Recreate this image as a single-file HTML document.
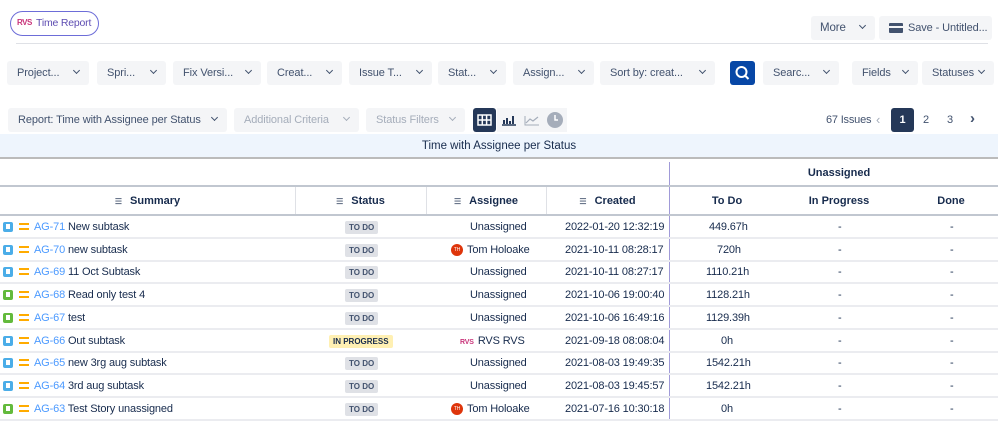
<!DOCTYPE html>
<html><head><meta charset="utf-8"><style>
*{box-sizing:border-box;margin:0;padding:0}
body{width:998px;height:422px;overflow:hidden;background:#fff;font-family:"Liberation Sans",Arial,sans-serif;font-size:11px;color:#172b4d;position:relative}
.a{position:absolute}
.btn{position:absolute;height:24px;background:#f4f5f7;border-radius:3px;color:#42526e;font-size:11px;letter-spacing:-0.1px;line-height:24px;padding-left:10px;white-space:nowrap}
.btn .cv{position:absolute;right:10px;top:0;font-size:9px}
.dis{color:#a5adba}
.cv:before{content:"";display:inline-block;width:4px;height:4px;border-right:1.5px solid currentColor;border-bottom:1.5px solid currentColor;transform:rotate(45deg);position:relative;top:-3px}
.row{position:absolute;left:0;width:998px;height:23px;border-bottom:2px solid #ebecf0;font-size:11px;letter-spacing:-0.15px;color:#172b4d}
.row div{position:absolute;top:0;line-height:22px;white-space:nowrap}
.td{background:#dfe1e6;color:#42526e;font-size:8px;font-weight:bold;padding:0 4px;line-height:13px!important;top:5px!important;border-radius:2px;letter-spacing:0}
.ip{background:#fff0b3;color:#172b4d}
.ic{width:10px;height:10px;border-radius:2px;top:6px!important}
.ic:after{content:"";position:absolute;left:3px;top:2px;width:4px;height:5px;background:#fff}
.sub{background:#4bade8}
.sto{background:#63ba3c}
.pr{left:19px;top:5px!important;line-height:0!important}
.pr:before,.pr:after{content:"";display:block;width:10px;height:2px;background:#ffab00;margin-top:2px}
.pr:after{margin-top:3px}
.key{color:#4c9aff}
.th{position:absolute;font-weight:bold;font-size:11px;color:#172b4d;text-align:center;line-height:28px}
.sort{font-size:8px;color:#6b778c;margin-right:8px}
.av{display:inline-block;width:12px;height:12px;border-radius:50%;background:#de350b;color:#fff;font-size:5px;text-align:center;line-height:12px;vertical-align:middle;margin-right:4px}
</style></head><body>
<div class="a" style="left:10px;top:11px;width:89px;height:25px;border:1.3px solid #6d6dd8;border-radius:13px;color:#5e4db2;font-size:10.5px;line-height:22px;padding-left:25px;letter-spacing:-0.2px">Time Report</div>
<div class="a" style="left:17px;top:18px;font-size:8px;font-weight:bold;color:#c9347a;letter-spacing:-0.5px">RVS</div>
<div class="a" style="left:16px;top:43px;width:972px;height:1px;background:#dfe1e6"></div>
<div class="btn" style="left:811px;top:16px;width:64px;padding-left:9px;font-size:11.5px">More<span class="cv"></span></div>
<div class="btn" style="left:879px;top:16px;width:113px;padding-left:29px">Save - Untitled...</div>
<div class="a" style="left:889px;top:23px;width:14px;height:10px;background:#42526e;border-radius:1px"><div class="a" style="left:0;top:3px;width:14px;height:2px;background:#f4f5f7"></div></div>

<div class="btn" style="left:7px;top:61px;width:82px">Project...<span class="cv"></span></div>
<div class="btn" style="left:97px;top:61px;width:69px">Spri...<span class="cv"></span></div>
<div class="btn" style="left:173px;top:61px;width:88px">Fix Versi...<span class="cv"></span></div>
<div class="btn" style="left:267px;top:61px;width:75px">Creat...<span class="cv"></span></div>
<div class="btn" style="left:349px;top:61px;width:83px">Issue T...<span class="cv"></span></div>
<div class="btn" style="left:438px;top:61px;width:68px">Stat...<span class="cv"></span></div>
<div class="btn" style="left:513px;top:61px;width:81px">Assign...<span class="cv"></span></div>
<div class="btn" style="left:600px;top:61px;width:115px">Sort by: creat...<span class="cv"></span></div>
<div class="a" style="left:730px;top:61px;width:25px;height:24px;background:#0747a6;border-radius:3px">
<svg width="25" height="24"><circle cx="11.5" cy="11" r="5" stroke="#fff" stroke-width="2" fill="none"/><path d="M15 14.5l3.5 3.5" stroke="#fff" stroke-width="2"/></svg></div>
<div class="btn" style="left:763px;top:61px;width:76px">Searc...<span class="cv"></span></div>
<div class="btn" style="left:852px;top:61px;width:66px">Fields<span class="cv"></span></div>
<div class="btn" style="left:922px;top:61px;width:72px">Statuses<span class="cv"></span></div>

<div class="btn" style="left:8px;top:108px;width:219px">Report: Time with Assignee per Status<span class="cv"></span></div>
<div class="btn dis" style="left:234px;top:108px;width:125px">Additional Criteria<span class="cv"></span></div>
<div class="btn dis" style="left:366px;top:108px;width:99px">Status Filters<span class="cv"></span></div>
<div class="a" style="left:473px;top:108px;width:23px;height:24px;background:#253858;border-radius:3px">
<svg width="23" height="24"><rect x="5" y="7" width="13" height="10" fill="none" stroke="#fff" stroke-width="1.5"/><path d="M5 12h13M9.3 7v10M13.6 7v10" stroke="#fff" stroke-width="1.5"/></svg></div>
<div class="a" style="left:497px;top:108px;width:23px;height:24px;background:#f4f5f7">
<svg width="23" height="24"><path d="M5 17h14" stroke="#253858" stroke-width="1.5"/><path d="M7 12v4M10 10v6M13 13v3M16 8v8" stroke="#253858" stroke-width="2"/></svg></div>
<div class="a" style="left:520px;top:108px;width:23px;height:24px;background:#f4f5f7">
<svg width="23" height="24"><path d="M5 8v9h14" stroke="#a5adba" fill="none" stroke-width="1"/><path d="M6 15l4-4 3 2 5-4" stroke="#a5adba" fill="none" stroke-width="1.2"/></svg></div>
<div class="a" style="left:543px;top:108px;width:24px;height:24px;background:#f4f5f7">
<svg width="24" height="24"><circle cx="12" cy="12" r="8" fill="#a5adba"/><path d="M12 7v5h3" stroke="#fff" stroke-width="1.5" fill="none"/></svg></div>
<div class="a" style="left:826px;top:114px;color:#42526e;font-size:11px;letter-spacing:-0.2px">67 Issues</div>
<div class="a" style="left:876px;top:112px;color:#a5adba;font-size:13px">&#8249;</div>
<div class="a" style="left:891px;top:108px;width:23px;height:24px;background:#253858;border-radius:3px;color:#fff;font-weight:bold;text-align:center;line-height:24px">1</div>
<div class="a" style="left:923px;top:114px;color:#42526e">2</div>
<div class="a" style="left:947px;top:114px;color:#42526e">3</div>
<div class="a" style="left:970px;top:110px;color:#42526e;font-size:15px;font-weight:bold">&#8250;</div>

<div class="a" style="left:0;top:134px;width:998px;height:24px;background:#eef5fd;text-align:center;line-height:24px;font-size:11.5px;color:#172b4d">Time with Assignee per Status</div>
<div class="a" style="left:0;top:157px;width:998px;height:2px;background:#bbb"></div>
<div class="th" style="left:669px;top:159px;width:340px">Unassigned</div>
<div class="a" style="left:669px;top:162px;width:1px;height:258px;background:#a09ad8"></div>
<div class="a" style="left:0;top:185px;width:998px;height:2px;background:#c1c7d0"></div>
<div class="th" style="left:0;top:187px;width:295px"><span class="sort">&#9776;</span>Summary</div>
<div class="a" style="left:295px;top:187px;width:1px;height:28px;background:#dfe1e6"></div>
<div class="th" style="left:295px;top:187px;width:131px"><span class="sort">&#9776;</span>Status</div>
<div class="a" style="left:426px;top:187px;width:1px;height:28px;background:#dfe1e6"></div>
<div class="th" style="left:426px;top:187px;width:120px"><span class="sort">&#9776;</span>Assignee</div>
<div class="a" style="left:546px;top:187px;width:1px;height:28px;background:#dfe1e6"></div>
<div class="th" style="left:546px;top:187px;width:123px"><span class="sort">&#9776;</span>Created</div>
<div class="th" style="left:669px;top:187px;width:116px">To Do</div>
<div class="th" style="left:783px;top:187px;width:112px">In Progress</div>
<div class="th" style="left:900px;top:187px;width:102px">Done</div>
<div class="a" style="left:0;top:214px;width:998px;height:2px;background:#c1c7d0"></div>

<div class="a" style="left:0;top:216px">
<div class="row" style="top:0"><div class="ic sub" style="left:3px"></div><div class="pr"></div><div style="left:34px"><span class="key">AG-71</span> New subtask</div><div class="td" style="left:345px">TO DO</div><div style="left:470px">Unassigned</div><div style="left:565px">2022-01-20 12:32:19</div><div style="left:709px">449.67h</div><div style="left:838px">-</div><div style="left:950px">-</div></div>
<div class="row" style="top:22.7px"><div class="ic sub" style="left:3px"></div><div class="pr"></div><div style="left:34px"><span class="key">AG-70</span> new subtask</div><div class="td" style="left:345px">TO DO</div><div style="left:451px"><span class="av">TH</span>Tom Holoake</div><div style="left:565px">2021-10-11 08:28:17</div><div style="left:717px">720h</div><div style="left:838px">-</div><div style="left:950px">-</div></div>
<div class="row" style="top:45.4px"><div class="ic sub" style="left:3px"></div><div class="pr"></div><div style="left:34px"><span class="key">AG-69</span> 11 Oct Subtask</div><div class="td" style="left:345px">TO DO</div><div style="left:470px">Unassigned</div><div style="left:565px">2021-10-11 08:27:17</div><div style="left:706px">1110.21h</div><div style="left:838px">-</div><div style="left:950px">-</div></div>
<div class="row" style="top:68.1px"><div class="ic sto" style="left:3px"></div><div class="pr"></div><div style="left:34px"><span class="key">AG-68</span> Read only test 4</div><div class="td" style="left:345px">TO DO</div><div style="left:470px">Unassigned</div><div style="left:565px">2021-10-06 19:00:40</div><div style="left:706px">1128.21h</div><div style="left:838px">-</div><div style="left:950px">-</div></div>
<div class="row" style="top:90.8px"><div class="ic sto" style="left:3px"></div><div class="pr"></div><div style="left:34px"><span class="key">AG-67</span> test</div><div class="td" style="left:345px">TO DO</div><div style="left:470px">Unassigned</div><div style="left:565px">2021-10-06 16:49:16</div><div style="left:706px">1129.39h</div><div style="left:838px">-</div><div style="left:950px">-</div></div>
<div class="row" style="top:113.5px"><div class="ic sub" style="left:3px"></div><div class="pr"></div><div style="left:34px"><span class="key">AG-66</span> Out subtask</div><div class="td ip" style="left:329px">IN PROGRESS</div><div style="left:460px"><span style="color:#c9347a;font-size:7px;font-weight:bold;margin-right:4px">RVS</span>RVS RVS</div><div style="left:565px">2021-09-18 08:08:04</div><div style="left:721px">0h</div><div style="left:838px">-</div><div style="left:950px">-</div></div>
<div class="row" style="top:136.2px"><div class="ic sub" style="left:3px"></div><div class="pr"></div><div style="left:34px"><span class="key">AG-65</span> new 3rg aug subtask</div><div class="td" style="left:345px">TO DO</div><div style="left:470px">Unassigned</div><div style="left:565px">2021-08-03 19:49:35</div><div style="left:706px">1542.21h</div><div style="left:838px">-</div><div style="left:950px">-</div></div>
<div class="row" style="top:158.9px"><div class="ic sub" style="left:3px"></div><div class="pr"></div><div style="left:34px"><span class="key">AG-64</span> 3rd aug subtask</div><div class="td" style="left:345px">TO DO</div><div style="left:470px">Unassigned</div><div style="left:565px">2021-08-03 19:45:57</div><div style="left:706px">1542.21h</div><div style="left:838px">-</div><div style="left:950px">-</div></div>
<div class="row" style="top:181.6px"><div class="ic sto" style="left:3px"></div><div class="pr"></div><div style="left:34px"><span class="key">AG-63</span> Test Story unassigned</div><div class="td" style="left:345px">TO DO</div><div style="left:451px"><span class="av">TH</span>Tom Holoake</div><div style="left:565px">2021-07-16 10:30:18</div><div style="left:721px">0h</div><div style="left:838px">-</div><div style="left:950px">-</div></div>
</div>
</body></html>
